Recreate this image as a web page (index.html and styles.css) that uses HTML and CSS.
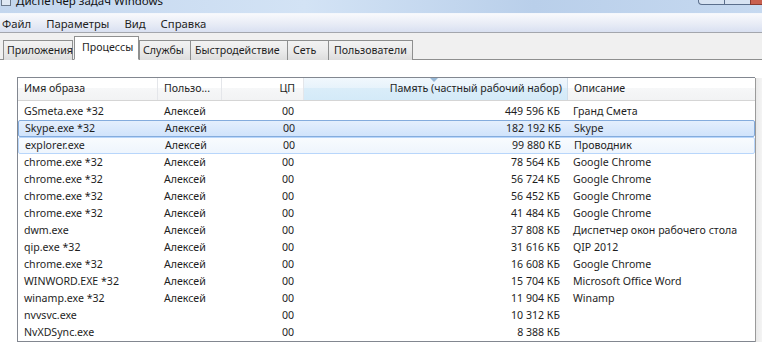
FILE: index.html
```html
<!DOCTYPE html>
<html lang="ru">
  <head>
    <meta charset="UTF-8" />
    <title>Диспетчер задач Windows</title>
    <link rel="stylesheet" href="styles.css">
  </head>
  <body>
    <div class="titlebar">
      <span class="appicon"></span>
      <span class="title">Диспетчер задач Windows</span>
      <div class="winbtns">
        <span class="wb"></span>
        <span class="wb"></span>
        <span class="wb close"></span>
      </div>
    </div>

    <ul class="menubar">
      <li>Файл</li>
      <li>Параметры</li>
      <li>Вид</li>
      <li>Справка</li>
    </ul>

    <ul class="tabs">
      <li>Приложения</li>
      <li class="active">Процессы</li>
      <li>Службы</li>
      <li>Быстродействие</li>
      <li>Сеть</li>
      <li>Пользователи</li>
    </ul>

    <div class="panel">
      <div class="list">
        <div class="row head">
          <span class="c-name">Имя образа</span>
          <span class="c-user">Пользо...</span>
          <span class="c-cpu">ЦП</span>
          <span class="c-mem sorted">Память (частный рабочий набор)<i class="arrow"></i></span>
          <span class="c-desc">Описание</span>
        </div>
        <div class="rows"></div>
      </div>
      <div class="scroll"></div>
    </div>

    <script>
      let data = [
        ["GSmeta.exe *32", "Алексей", "449 596 КБ", "Гранд Смета"],
        ["Skype.exe *32", "Алексей", "182 192 КБ", "Skype", "selected"],
        ["explorer.exe", "Алексей", "99 880 КБ", "Проводник", "hover"],
        ["chrome.exe *32", "Алексей", "78 564 КБ", "Google Chrome"],
        ["chrome.exe *32", "Алексей", "56 724 КБ", "Google Chrome"],
        ["chrome.exe *32", "Алексей", "56 452 КБ", "Google Chrome"],
        ["chrome.exe *32", "Алексей", "41 484 КБ", "Google Chrome"],
        ["dwm.exe", "Алексей", "37 808 КБ", "Диспетчер окон рабочего стола"],
        ["qip.exe *32", "Алексей", "31 616 КБ", "QIP 2012"],
        ["chrome.exe *32", "Алексей", "16 608 КБ", "Google Chrome"],
        ["WINWORD.EXE *32", "Алексей", "15 704 КБ", "Microsoft Office Word"],
        ["winamp.exe *32", "Алексей", "11 904 КБ", "Winamp"],
        ["nvvsvc.exe", "", "10 312 КБ", ""],
        ["NvXDSync.exe", "", "8 388 КБ", ""]
      ];

      let str = ``;
      data.forEach(function (item) {
        str +=
          '<div class="row ' + (item[4] || "") + '">' +
          '<span class="c-name">' + item[0] + "</span>" +
          '<span class="c-user">' + item[1] + "</span>" +
          '<span class="c-cpu">00</span>' +
          '<span class="c-mem">' + item[2] + "</span>" +
          '<span class="c-desc">' + item[3] + "</span>" +
          "</div>";
      });
      document.querySelector(".rows").innerHTML = str;
    </script>
  </body>
</html>
```

FILE: styles.css
```css
* {
  margin: 0;
  padding: 0;
  box-sizing: border-box;
}

ul,
li {
  list-style: none;
}

html,
body {
  width: 762px;
  height: 344px;
  overflow: hidden;
}

body {
  font-family: "Noto Sans", "DejaVu Sans", sans-serif;
  font-size: 10.6px;
  color: #1e1e1e;
  background-color: #fff;
}

/* title bar, the window is cut at the top */
.titlebar {
  display: flex;
  align-items: flex-end;
  height: 13px;
  overflow: hidden;
  background: linear-gradient(to right, #c3d6ee, #d3e3f5 40%, #b9cfea 70%, #c6d9f0);
}
.titlebar .appicon {
  width: 10px;
  height: 6px;
  margin: 0 5px 7px 1px;
  border: 1px solid #6c7a8c;
  border-top: none;
  background-color: #dfe8f3;
}
.titlebar .title {
  font-size: 11.5px;
  line-height: 14px;
  margin-bottom: 5px;
  color: #111;
}
.winbtns {
  display: flex;
  align-self: flex-start;
  margin-left: auto;
  margin-right: -8px;
}
.winbtns .wb {
  width: 27px;
  height: 5px;
  border: 1px solid #5b6f8c;
  border-top: none;
  margin-left: -1px;
  background-color: #d7e3f2;
}
.winbtns .wb:first-child {
  border-bottom-left-radius: 4px;
}
.winbtns .close {
  width: 20px;
  background-color: #c9604f;
  border-color: #8a3a30;
}

.menubar {
  display: flex;
  height: 20px;
  align-items: center;
  padding-left: 2px;
  border-top: 1px solid #f4f7fc;
  border-bottom: 1px solid #a3a6ad;
  background: linear-gradient(#f8f9fc, #e8ecf6 55%, #d9e0f1);
  font-size: 11.3px;
}
.menubar li {
  margin-right: 15px;
}

/* tab strip */
.tabs {
  display: flex;
  align-items: flex-end;
  height: 27px;
  padding-left: 3px;
  background-color: #f0f0f0;
  border-bottom: 1px solid #8e8f8f;
}
.tabs li {
  height: 20px;
  line-height: 18px;
  padding-left: 4px;
  white-space: nowrap;
  margin-right: -1px;
  margin-bottom: -1px;
  border: 1px solid #8e8f8f;
  border-bottom: none;
  background: linear-gradient(#f2f2f2, #ebebeb 50%, #dddddd);
  font-size: 10.6px;
}
.tabs li:nth-child(1) { width: 70px; padding-left: 3px; }
.tabs li:nth-child(3) { width: 52px; padding-left: 3px; }
.tabs li:nth-child(4) { width: 98px; }
.tabs li:nth-child(5) { width: 42px; padding-left: 5px; }
.tabs li:nth-child(6) { width: 85px; padding-left: 5px; }

.tabs li.active {
  position: relative;
  width: 65px;
  height: 24px;
  line-height: 20px;
  padding-left: 7px;
  margin: 0 0 -1px 2px;
  background: #fff;
  border-bottom: 1px solid #fff;
  z-index: 1;
}

.panel {
  display: flex;
  padding: 17px 0 0 17px;
  height: 285px;
}

.list {
  flex: 1;
  border-top: 1px solid #828790;
  border-left: 1px solid #828790;
  border-bottom: 1px solid #828790;
  height: 265px;
  overflow: hidden;
}

.scroll {
  width: 7px;
  margin-top: 1px;
  border-left: 1px solid #9a9a9a;
  background: linear-gradient(to right, #e9e9e9, #f4f4f4);
  height: 264px;
}

.row {
  display: flex;
  height: 17px;
  line-height: 15px;
  border: 1px solid transparent;
  border-left: none;
}
.row span {
  white-space: nowrap;
  overflow: hidden;
}
.c-name {
  width: 140px;
  padding-left: 6px;
}
.c-user {
  width: 64px;
  padding-left: 6px;
}
.c-cpu {
  width: 82px;
  padding-right: 10px;
  text-align: right;
}
.c-mem {
  width: 264px;
  padding-right: 8px;
  text-align: right;
}
.c-desc {
  flex: 1;
  padding-left: 5px;
}

.row.head {
  height: 23px;
  line-height: 21px;
  margin-bottom: 2px;
  border: none;
  border-bottom: 1px solid #d5d5d5;
  background: linear-gradient(#ffffff, #ffffff 45%, #f6f7f8 46%, #f2f3f4);
}
.row.head span {
  border-right: 1px solid #e4e6ea;
  position: relative;
}
.row.head .c-cpu {
  padding-right: 8px;
}
.row.head .c-mem {
  padding-right: 5px;
  border-right-color: #cfdde9;
  background: linear-gradient(#f1f8fd, #e7f3fb 45%, #daedf9 46%, #d4eaf8);
  overflow: visible;
}
.row.head .c-desc {
  border-right: none;
  padding-left: 6px;
}
.arrow {
  position: absolute;
  left: 126px;
  top: 0;
  width: 0;
  height: 0;
  border-left: 4px solid transparent;
  border-right: 4px solid transparent;
  border-top: 4px solid #97b8d6;
}

.row.selected {
  border: 1px solid #84acdd;
  border-radius: 2px;
  background: linear-gradient(#e4effd, #d0e3fb);
}
.row.hover {
  border: 1px solid #b8d6fb;
  border-radius: 2px;
  background: linear-gradient(#f8fbfe, #eef5fd);
}
```
